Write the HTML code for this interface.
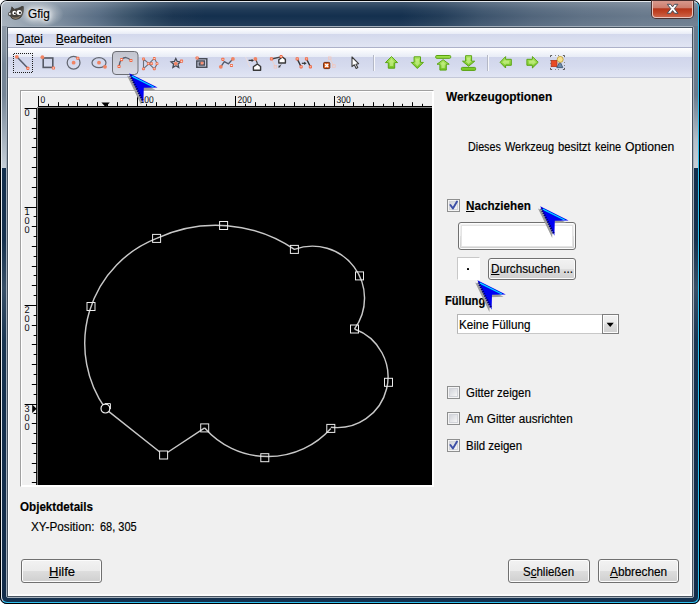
<!DOCTYPE html><html><head><meta charset="utf-8"><title>Gfig</title><style>
html,body{margin:0;padding:0;background:#fff;}
body{width:700px;height:604px;overflow:hidden;position:relative;font-family:"Liberation Sans",sans-serif;font-size:12px;}
.a{position:absolute;}
.t{position:absolute;white-space:pre;line-height:14px;height:14px;transform-origin:0 0;-webkit-text-stroke:0.16px #000;}
.t u{text-decoration:underline;text-underline-offset:0.5px;}
#win{position:absolute;left:0;top:0;width:700px;height:604px;border-radius:7px 7px 7px 7px;overflow:hidden;background:#6b7b8d;}
#client{position:absolute;left:8px;top:28px;width:684px;height:568px;background:#f0f0f0;}
.btn{position:absolute;box-sizing:border-box;border:1px solid #707070;border-radius:3px;background:linear-gradient(#f2f2f2 0%,#ebebeb 48%,#dddddd 52%,#cfcfcf 100%);box-shadow:inset 0 0 0 1px #fcfcfc;}
.cb{position:absolute;box-sizing:border-box;width:13px;height:13px;border:1px solid #8e8f8f;background:#f4f4f4;box-shadow:inset 0 0 0 1px #f4f4f4, inset 0 0 0 2px #d2d4da;}
.cb i{position:absolute;left:2px;top:2px;width:7px;height:7px;background:linear-gradient(135deg,#d2d4da,#f6f6f6);}
</style></head><body>
<div id="win">
<div class="a" style="left:0;top:0;width:700px;height:28px;background:linear-gradient(97deg,#a6b1bd 0px,#98a5b2 22px,#8292a2 48px,#6d7f93 74px,#586d84 100px,#40586f 124px,#2a445e 148px,#1b3551 174px,#14304e 205px,#14304e 400px,#233d59 440px,#3c536c 480px,#51657b 530px,#5f7185 580px,#68798c 640px,#6b7b8d 700px);"></div>
<div class="a" style="left:0;top:0;width:700px;height:28px;background:linear-gradient(rgba(255,255,255,.22) 0px,rgba(255,255,255,.06) 9px,rgba(255,255,255,0) 16px,rgba(255,255,255,.07) 28px);"></div>
<div class="a" style="left:0;top:26px;width:8px;height:578px;background:linear-gradient(180deg,#9aa6b3 0px,#8c98a6 30px,#8391a0 50px,#758596 64px,#758596 95px,#a8b4c0 140px,#c6cfd8 168px,#14304e 168px,#16314e 240px,#385068 288px,#1a3652 340px,#14304e 400px,#132c49 604px);background-position:0 -26px;background-size:8px 604px;"></div>
<div class="a" style="left:692px;top:26px;width:8px;height:578px;background:linear-gradient(180deg,#6b7b8d 0px,#6b7b8d 95px,#b4bec8 140px,#c8d0d8 168px,#14304e 168px,#16314e 240px,#385068 288px,#1a3652 340px,#14304e 400px,#132c49 604px);background-position:0 -26px;background-size:8px 604px;"></div>
<div class="a" style="left:0;top:596px;width:700px;height:8px;background:#14304e;"></div>
<div class="a" style="left:0;top:0;width:700px;height:604px;border-radius:7px;box-sizing:border-box;border:1px solid #000;"></div>
<div class="a" style="left:1px;top:1px;width:698px;height:602px;border-radius:6px;box-sizing:border-box;border:1px solid #e4e9ee;border-right-color:#30c0f0;border-bottom-color:#30c0f0;"></div>
<div class="a" style="left:6px;top:26px;width:688px;height:572px;box-sizing:border-box;border:1px solid #a4afbb;border-radius:2px;"></div>
<div class="a" style="left:7px;top:27px;width:686px;height:570px;box-sizing:border-box;border:1px solid #46525f;"></div>
<svg class="a" style="left:8px;top:6px" width="16" height="14" viewBox="0 0 16 14">
<path d="M3.2 3.6 L3.8 0.8 L6.2 3.2 Q9.5 2.6 12 1.4 Q14.6 -0.4 15.4 0.6 Q16 5 14.6 8.6 Q12.6 13.2 7.6 13.4 Q3.6 13.4 2.4 10.2 Q0.2 9.6 0.3 7.8 Q0.6 6 2.4 6.2 Q2.4 4.6 3.2 3.6Z" fill="#46423c" stroke="#2a2824" stroke-width=".5"/>
<path d="M3.2 10.2 Q7 13.4 12.6 9.4 Q11 12.8 7.4 12.9 Q4.4 12.8 3.2 10.2Z" fill="#8a7c68"/>
<ellipse cx="6.3" cy="6.9" rx="2" ry="2.1" fill="#fff"/><ellipse cx="11.2" cy="6.5" rx="2.6" ry="2.5" fill="#fff"/>
<circle cx="6.9" cy="7.2" r=".9" fill="#111"/><circle cx="12" cy="6.8" r="1.1" fill="#111"/>
<ellipse cx="1.8" cy="7.9" rx="1.5" ry="1.3" fill="#f4f4f4" stroke="#1c1c1c" stroke-width=".5"/>
</svg>
<div class="a" style="left:18px;top:1px;width:46px;height:26px;background:radial-gradient(ellipse at center,rgba(255,255,255,.55) 0%,rgba(255,255,255,.35) 35%,rgba(255,255,255,0) 70%);"></div>
<span class="t" style="left:28.34px;top:7px;font-size:12px;color:#000;transform:scaleX(0.9877);text-shadow:0 0 4px #fff,0 0 6px #fff,0 0 8px rgba(255,255,255,.8);">Gfig</span>
<div class="a" style="left:652px;top:1px;width:41px;height:17px;box-sizing:border-box;border:1px solid #e9c4bc;border-top:none;border-radius:0 0 4px 4px;background:linear-gradient(#d8988c 0%,#cc7c6c 44%,#b4341a 48%,#c04425 70%,#cc6248 100%);box-shadow:0 0 0 1px #4a3030;"></div>
<svg class="a" style="left:666px;top:3px" width="14" height="12" viewBox="0 0 14 12"><path d="M1.3 1.3 L4.7 1.3 L6.6 3.9 L8.5 1.3 L11.9 1.3 L8.4 5.7 L12 10.3 L8.6 10.3 L6.6 7.6 L4.6 10.3 L1.2 10.3 L4.8 5.7 Z" fill="#fff" stroke="#464e5a" stroke-width="1" stroke-linejoin="round"/></svg>
<div id="client">
<div class="a" style="left:0px;top:0px;width:684px;height:19px;background:linear-gradient(#ffffff 0%,#f4f6fb 15%,#e8ecf6 31%,#d3d8ec 32%,#d9deef 60%,#e1e5f3 100%);"></div>
<div class="a" style="left:0px;top:19px;width:684px;height:1px;background:#adb2ca;"></div>
<div class="a" style="left:0px;top:20px;width:684px;height:29px;background:linear-gradient(#ffffff 0%,#f4f6fb 14%,#e8ecf6 30%,#d0d5eb 31%,#d6dbee 65%,#e1e5f4 100%);"></div>
<div class="a" style="left:0px;top:49px;width:684px;height:1px;background:#c4c8d8;"></div>
<div class="a" style="left:0px;top:50px;width:1px;height:518px;background:#fff;"></div>
<div class="a" style="left:682px;top:50px;width:2px;height:518px;background:linear-gradient(90deg,#f8f8f8,#fff);"></div>
<div class="a" style="left:0px;top:566px;width:684px;height:2px;background:linear-gradient(#f8f8f8,#fff);"></div>
</div>
<span class="t" style="left:15.85px;top:31.6px;font-size:12px;color:#000;transform:scaleX(0.9538);"><u>D</u>atei</span>
<span class="t" style="left:55.74px;top:31.6px;font-size:12px;color:#000;transform:scaleX(0.9601);"><u>B</u>earbeiten</span>
<svg class="a" style="left:0;top:48px" width="700" height="30" viewBox="0 48 700 30"><path d="M13.5 53.5 H32 L32.5 54 V72.5 H14 L13.5 72 Z" fill="none" stroke="#1c1c1c" stroke-width="1" stroke-dasharray="1 1" shape-rendering="crispEdges"/><line x1="16.8" y1="56.8" x2="27.9" y2="68.2" stroke="#565c6c" stroke-width="1.5"/><circle cx="16.8" cy="56.8" r="1.9" fill="#f08464"/><rect x="26.3" y="66.8" width="3.1" height="3.1" fill="#f06a48" rx=".8"/><rect x="27.1" y="67.8" width="1.6" height="1" fill="#ffd0bc"/><rect x="43.2" y="58" width="9.6" height="9.4" fill="none" stroke="#565a66" stroke-width="1.6"/><circle cx="42.4" cy="57.2" r="1.9" fill="#f08464"/><rect x="51.9" y="66.5" width="3.1" height="3.1" fill="#f06a48" rx=".8"/><rect x="52.6" y="67.5" width="1.6" height="1" fill="#fff"/><circle cx="73.6" cy="62.7" r="6.4" fill="none" stroke="#646872" stroke-width="1.25"/><circle cx="73.6" cy="62.7" r="1.9" fill="#f08464"/><rect x="76.2" y="56.7" width="3.1" height="3.1" fill="#f06a48" rx=".8"/><rect x="76.9" y="57.7" width="1.6" height="1" fill="#ffd0bc"/><ellipse cx="99" cy="62.7" rx="7" ry="5" fill="none" stroke="#646872" stroke-width="1.25"/><circle cx="99.0" cy="62.7" r="1.9" fill="#f08464"/><circle cx="105.0" cy="66.8" r="1.9" fill="#f08464"/><defs><linearGradient id="pg" x1="0" y1="0" x2="0" y2="1"><stop offset="0" stop-color="#c2c4ce"/><stop offset="1" stop-color="#d9dbe6"/></linearGradient></defs><rect x="112.5" y="51.5" width="25.5" height="23" rx="3.5" fill="url(#pg)" stroke="#6c6e74" stroke-width="1"/><path d="M119 66.5 Q119.5 61.5 121.5 59.6 Q125.8 55 131 60.5" fill="none" stroke="#5a6070" stroke-width="1.3"/><rect x="117.5" y="65.0" width="3.1" height="3.1" fill="#f06a48" rx=".8"/><rect x="118.2" y="66.0" width="1.6" height="1" fill="#ffd0bc"/><rect x="120.0" y="58.1" width="3.1" height="3.1" fill="#f06a48" rx=".8"/><rect x="120.7" y="59.1" width="1.6" height="1" fill="#fff"/><rect x="129.4" y="59.0" width="3.1" height="3.1" fill="#f06a48" rx=".8"/><rect x="130.2" y="60.0" width="1.6" height="1" fill="#ffd0bc"/><path d="M143.5 59 L143.5 68.6 L149 63.7 Z M149 63.7 L154.3 58.3 L157.3 63.7 L154.3 68.8 Z" fill="none" stroke="#6c707a" stroke-width="1.1"/><rect x="142.1" y="57.6" width="2.8" height="2.8" fill="#f06a48" rx=".8"/><rect x="142.7" y="58.5" width="1.6" height="1" fill="#ffd0bc"/><rect x="142.1" y="67.4" width="2.8" height="2.8" fill="#f06a48" rx=".8"/><rect x="142.7" y="68.3" width="1.6" height="1" fill="#ffd0bc"/><rect x="146.9" y="62.3" width="2.8" height="2.8" fill="#f06a48" rx=".8"/><rect x="147.5" y="63.2" width="1.6" height="1" fill="#ffd0bc"/><rect x="150.2" y="62.3" width="2.8" height="2.8" fill="#f06a48" rx=".8"/><rect x="150.8" y="63.2" width="1.6" height="1" fill="#ffd0bc"/><rect x="152.9" y="57.1" width="2.8" height="2.8" fill="#f06a48" rx=".8"/><rect x="153.5" y="58.0" width="1.6" height="1" fill="#ffd0bc"/><rect x="155.6" y="62.3" width="2.8" height="2.8" fill="#f06a48" rx=".8"/><rect x="156.2" y="63.2" width="1.6" height="1" fill="#ffd0bc"/><rect x="152.9" y="67.4" width="2.8" height="2.8" fill="#f06a48" rx=".8"/><rect x="153.5" y="68.3" width="1.6" height="1" fill="#ffd0bc"/><polygon points="175.8,58.5 177.2,61.5 180.5,61.9 178.0,64.1 178.7,67.4 175.8,65.7 172.9,67.4 173.6,64.1 171.1,61.9 174.4,61.5" fill="none" stroke="#484c56" stroke-width="1.3"/><circle cx="175.8" cy="63.6" r="1.9" fill="#f08464"/><rect x="179.9" y="59.6" width="3.2" height="3.2" fill="#f06a48" rx=".8"/><rect x="180.7" y="60.7" width="1.6" height="1" fill="#fff"/><path d="M197 58.7 L206.8 58.7 L206.8 67.2 L196.8 67.2 L196.8 61.1 L204.4 61.1 L204.4 65 L199.3 65 L199.3 63.1 L202 63.1" fill="none" stroke="#4a4e58" stroke-width="1.5"/><rect x="195.6" y="56.5" width="3.1" height="3.1" fill="#f06a48" rx=".8"/><rect x="196.4" y="57.5" width="1.6" height="1" fill="#ffd0bc"/><rect x="200.6" y="61.7" width="2.8" height="2.8" fill="#f06a48" rx=".8"/><rect x="201.2" y="62.6" width="1.6" height="1" fill="#ffd0bc"/><path d="M220.8 66.8 L224.3 61.6 L228.5 63.8 L232.9 58.9" fill="none" stroke="#565c6c" stroke-width="1.4" stroke-linejoin="round"/><circle cx="220.8" cy="66.8" r="1.9" fill="#f08464"/><rect x="221.3" y="57.8" width="3.1" height="3.1" fill="#f06a48" rx=".8"/><rect x="222.1" y="58.8" width="1.6" height="1" fill="#ffd0bc"/><rect x="229.9" y="63.9" width="3.1" height="3.1" fill="#f06a48" rx=".8"/><rect x="230.7" y="64.9" width="1.6" height="1" fill="#fff"/><circle cx="232.9" cy="58.9" r="1.9" fill="#f08464"/><path d="M245.6 57 L249.7 67" stroke="#ecdcdc" stroke-width="1" fill="none"/><path d="M248.6 60.4 L252.5 60.4" stroke="#333" stroke-width="1.2"/><path d="M251.6 58.9 L254 60.4 L251.6 61.9 Z" fill="#333"/><path d="M255.6 59 L257.4 63.4" stroke="#444" stroke-width="1.2"/><circle cx="255.4" cy="58.9" r="1.9" fill="#f08464"/><path d="M253.4 70.2 V66.79 L257.36 64 L260.6 66.48 V70.2 Z" fill="#fff" stroke="#383838" stroke-width="1.4" stroke-linejoin="round"/><path d="M271.5 59 L275.4 66.8" stroke="#ecd0c8" stroke-width="1" fill="none"/><path d="M271.5 59 L281 56.8" stroke="#444" stroke-width="1.3"/><rect x="274.1" y="65.5" width="2.6" height="2.6" fill="none" stroke="#f4c4b8" stroke-width=".7"/><path d="M278.8 63 V59.7 L282.43 57 L285.40000000000003 59.4 V63 Z" fill="#fff" stroke="#383838" stroke-width="1.4" stroke-linejoin="round"/><rect x="269.9" y="57.3" width="3.2" height="3.2" fill="#f06a48" rx=".8"/><rect x="270.7" y="58.4" width="1.6" height="1" fill="#ffd0bc"/><rect x="279.6" y="55.1" width="3" height="3" fill="#f06a48" rx=".8"/><rect x="280.3" y="56.1" width="1.6" height="1" fill="#ffd0bc"/><path d="M281 64.6 L279.6 66.2" stroke="#333" stroke-width="1"/><path d="M278.3 67.8 L278.9 65.2 L280.8 66.9 Z" fill="#333"/><path d="M297.2 58.9 L301.1 66.8 M306.5 58.9 L310.4 66.8" stroke="#333" stroke-width="1.4" fill="none"/><path d="M301.8 63.3 L305 63.3" stroke="#333" stroke-width="1.2"/><path d="M304.2 61.7 L306.6 63.3 L304.2 64.9 Z" fill="#333"/><rect x="295.6" y="57.3" width="3.2" height="3.2" fill="#f06a48" rx=".8"/><rect x="296.4" y="58.4" width="1.6" height="1" fill="#ffd0bc"/><rect x="299.5" y="65.2" width="3.2" height="3.2" fill="#f06a48" rx=".8"/><rect x="300.3" y="66.3" width="1.6" height="1" fill="#ffd0bc"/><rect x="304.9" y="57.3" width="3.2" height="3.2" fill="#f06a48" rx=".8"/><rect x="305.7" y="58.4" width="1.6" height="1" fill="#ffd0bc"/><rect x="308.8" y="65.2" width="3.2" height="3.2" fill="#f06a48" rx=".8"/><rect x="309.6" y="66.3" width="1.6" height="1" fill="#ffd0bc"/><path d="M329.7 58.2 L333.9 66" stroke="#ecd0c8" stroke-width="1" fill="none"/><rect x="328.4" y="56.9" width="2.6" height="2.6" fill="none" stroke="#f4c4b8" stroke-width=".7"/><rect x="332.6" y="64.7" width="2.6" height="2.6" fill="none" stroke="#f4c4b8" stroke-width=".7"/><rect x="323.6" y="62.4" width="6.2" height="6.2" rx="1" fill="#e0601c" stroke="#6a2a10" stroke-width="1"/><path d="M325.2 64 L328.2 67 M328.2 64 L325.2 67" stroke="#fff" stroke-width="1.5"/><path d="M352 57 L352 66.6 L354.3 64.8 L356.2 68.4 L357.8 67.6 L356 64.2 L358.6 63.7 Z" fill="#fff" stroke="#3c3c3c" stroke-width="1.1" stroke-linejoin="round"/><rect x="373" y="55" width="1" height="16" fill="#b4b8c6"/><rect x="374" y="55" width="1" height="16" fill="#f6f7fb"/><rect x="487" y="55" width="1" height="16" fill="#b4b8c6"/><rect x="488" y="55" width="1" height="16" fill="#f6f7fb"/><defs><linearGradient id="gg" x1="0" y1="0" x2="0" y2="1"><stop offset="0" stop-color="#b4ea68"/><stop offset="1" stop-color="#74c422"/></linearGradient><linearGradient id="gh" x1="0" y1="0" x2="1" y2="0"><stop offset="0" stop-color="#a8e458"/><stop offset="1" stop-color="#68bc14"/></linearGradient></defs><path d="M391.5 56.6 L397.6 62.6 L394.7 62.6 L394.7 68.2 L388.3 68.2 L388.3 62.6 L385.4 62.6 Z" fill="url(#gg)" stroke="#5ca616" stroke-width="1" stroke-linejoin="round"/><path d="M391.5 56.6 L397.6 62.6 L394.7 62.6 L394.7 68.2 L388.3 68.2 L388.3 62.6 L385.4 62.6 Z" fill="#d8f8a0" opacity=".55" transform="translate(391.5 62.400000000000006) scale(.5 .62) translate(-391.5 -62.400000000000006)"/><path d="M417.3 68.5 L423.40000000000003 62.4 L420.5 62.4 L420.5 56.8 L414.1 56.8 L414.1 62.4 L411.2 62.4 Z" fill="url(#gg)" stroke="#5ca616" stroke-width="1" stroke-linejoin="round"/><path d="M417.3 68.5 L423.40000000000003 62.4 L420.5 62.4 L420.5 56.8 L414.1 56.8 L414.1 62.4 L411.2 62.4 Z" fill="#d8f8a0" opacity=".55" transform="translate(417.3 62.65) scale(.5 .62) translate(-417.3 -62.65)"/><rect x="435.7" y="55.5" width="15" height="2.8" rx="1" fill="#9ce048" stroke="#58a010" stroke-width="1"/><path d="M443.1 59.7 L449.20000000000005 64.2 L446.3 64.2 L446.3 70.1 L439.90000000000003 70.1 L439.90000000000003 64.2 L437.0 64.2 Z" fill="url(#gg)" stroke="#5ca616" stroke-width="1" stroke-linejoin="round"/><path d="M443.1 59.7 L449.20000000000005 64.2 L446.3 64.2 L446.3 70.1 L439.90000000000003 70.1 L439.90000000000003 64.2 L437.0 64.2 Z" fill="#d8f8a0" opacity=".55" transform="translate(443.1 64.9) scale(.5 .62) translate(-443.1 -64.9)"/><path d="M468.6 66.3 L474.70000000000005 61.2 L471.6 61.2 L471.6 55.7 L465.6 55.7 L465.6 61.2 L462.5 61.2 Z" fill="url(#gg)" stroke="#5ca616" stroke-width="1" stroke-linejoin="round"/><path d="M468.6 66.3 L474.70000000000005 61.2 L471.6 61.2 L471.6 55.7 L465.6 55.7 L465.6 61.2 L462.5 61.2 Z" fill="#d8f8a0" opacity=".55" transform="translate(468.6 61.0) scale(.5 .62) translate(-468.6 -61.0)"/><rect x="461.4" y="67.4" width="14.2" height="3" rx="1" fill="#7ccc28" stroke="#58a010" stroke-width="1"/><path d="M500.1 62.3 L505.6 56.599999999999994 L505.6 59.3 L511.3 59.3 L511.3 65.3 L505.6 65.3 L505.6 68.0 Z" fill="url(#gg)" stroke="#5ca616" stroke-width="1" stroke-linejoin="round"/><path d="M500.1 62.3 L505.6 56.599999999999994 L505.6 59.3 L511.3 59.3 L511.3 65.3 L505.6 65.3 L505.6 68.0 Z" fill="#d8f8a0" opacity=".55" transform="translate(505.70000000000005 62.3) scale(.62 .5) translate(-505.70000000000005 -62.3)"/><path d="M538.2 62.3 L532.4 56.599999999999994 L532.4 59.3 L526.9 59.3 L526.9 65.3 L532.4 65.3 L532.4 68.0 Z" fill="url(#gg)" stroke="#5ca616" stroke-width="1" stroke-linejoin="round"/><path d="M538.2 62.3 L532.4 56.599999999999994 L532.4 59.3 L526.9 59.3 L526.9 65.3 L532.4 65.3 L532.4 68.0 Z" fill="#d8f8a0" opacity=".55" transform="translate(532.55 62.3) scale(.62 .5) translate(-532.55 -62.3)"/><rect x="551.2" y="60.4" width="5.8" height="6.2" fill="#e84a24" stroke="#b03820" stroke-width=".8"/><path d="M556.8 67.6 L560 61.6 L562.8 67.6 Z" fill="#6c8cac" stroke="#48607c" stroke-width="1" stroke-linejoin="round"/><circle cx="560.2" cy="59.4" r="3" fill="#f6e08c" stroke="#c0a040" stroke-width=".9"/><path d="M552.1 55.5 L550.5 55.5 L550.5 57.1" fill="none" stroke="#444" stroke-width="1" opacity=".85"/><path d="M562.9 55.5 L564.5 55.5 L564.5 57.1" fill="none" stroke="#444" stroke-width="1" opacity=".85"/><path d="M552.1 69.5 L550.5 69.5 L550.5 67.9" fill="none" stroke="#444" stroke-width="1" opacity=".85"/><path d="M562.9 69.5 L564.5 69.5 L564.5 67.9" fill="none" stroke="#444" stroke-width="1" opacity=".85"/><path d="M555 55.5 h1 M558 55.5 h1 M555 69.5 h1 M558 69.5 h1 M550.5 60 v1 M550.5 63 v1 M564.5 62 v1 M564.5 65 v1" stroke="#888" stroke-width="1"/></svg>
<div class="a" style="left:20px;top:90px;width:414px;height:397px;box-sizing:border-box;border:1px solid #a0a0a0;border-right-color:#fff;border-bottom-color:#fff;"></div>
<div class="a" style="left:21px;top:91px;width:412px;height:395px;box-sizing:border-box;border:1px solid #fff;"></div>
<div class="a" style="left:37px;top:107px;width:395px;height:378px;background:#808080;"></div>
<div class="a" style="left:38px;top:108px;width:394px;height:377px;background:#000;"></div>
<svg class="a" style="left:20px;top:90px" width="413" height="397" viewBox="20 90 413 397"><path d="M39 106.5 H432" stroke="#000" stroke-width="1"/><path d="M36.5 108 V485" stroke="#1a1a1a" stroke-width="1"/><path d="M38.5 96 V107 M48.5 103.8 V107 M58.5 102.2 V107 M68.5 103.8 V107 M77.5 102.2 V107 M87.5 103.8 V107 M97.5 102.2 V107 M107.5 103.8 V107 M117.5 102.2 V107 M127.5 103.8 V107 M137.5 96 V107 M146.5 103.8 V107 M156.5 102.2 V107 M166.5 103.8 V107 M176.5 102.2 V107 M186.5 103.8 V107 M196.5 102.2 V107 M205.5 103.8 V107 M215.5 102.2 V107 M225.5 103.8 V107 M235.5 96 V107 M245.5 103.8 V107 M255.5 102.2 V107 M265.5 103.8 V107 M274.5 102.2 V107 M284.5 103.8 V107 M294.5 102.2 V107 M304.5 103.8 V107 M314.5 102.2 V107 M324.5 103.8 V107 M334.5 96 V107 M343.5 103.8 V107 M353.5 102.2 V107 M363.5 103.8 V107 M373.5 102.2 V107 M383.5 103.8 V107 M393.5 102.2 V107 M402.5 103.8 V107 M412.5 102.2 V107 M422.5 103.8 V107" stroke="#000" stroke-width="1"/><path d="M24.6 108.5 H37 M33.6 118.5 H37 M31.8 128.5 H37 M33.6 138.5 H37 M31.8 147.5 H37 M33.6 157.5 H37 M31.8 167.5 H37 M33.6 177.5 H37 M31.8 187.5 H37 M33.6 197.5 H37 M24.6 207.5 H37 M33.6 216.5 H37 M31.8 226.5 H37 M33.6 236.5 H37 M31.8 246.5 H37 M33.6 256.5 H37 M31.8 266.5 H37 M33.6 275.5 H37 M31.8 285.5 H37 M33.6 295.5 H37 M24.6 305.5 H37 M33.6 315.5 H37 M31.8 325.5 H37 M33.6 335.5 H37 M31.8 344.5 H37 M33.6 354.5 H37 M31.8 364.5 H37 M33.6 374.5 H37 M31.8 384.5 H37 M33.6 394.5 H37 M24.6 404.5 H37 M33.6 413.5 H37 M31.8 423.5 H37 M33.6 433.5 H37 M31.8 443.5 H37 M33.6 453.5 H37 M31.8 463.5 H37 M33.6 472.5 H37 M31.8 482.5 H37" stroke="#000" stroke-width="1"/><path d="M101.4 102.4 L109.8 102.4 L105.6 107 Z" fill="#000"/><path d="M32.2 404.4 L32.2 413 L36.6 408.7 Z" fill="#000"/><text transform="translate(40.6,102.8) scale(1,1)" text-rendering="geometricPrecision" font-family="Liberation Sans, sans-serif" font-size="9.8" fill="#05060c" textLength="4.7" lengthAdjust="spacingAndGlyphs">0</text><text transform="translate(139.6,102.8) scale(1,1)" text-rendering="geometricPrecision" font-family="Liberation Sans, sans-serif" font-size="9.8" fill="#05060c" textLength="14.1" lengthAdjust="spacingAndGlyphs">100</text><text transform="translate(237.6,102.8) scale(1,1)" text-rendering="geometricPrecision" font-family="Liberation Sans, sans-serif" font-size="9.8" fill="#05060c" textLength="14.1" lengthAdjust="spacingAndGlyphs">200</text><text transform="translate(336.6,102.8) scale(1,1)" text-rendering="geometricPrecision" font-family="Liberation Sans, sans-serif" font-size="9.8" fill="#05060c" textLength="14.1" lengthAdjust="spacingAndGlyphs">300</text><text text-rendering="geometricPrecision" font-family="Liberation Sans, sans-serif" font-size="9.8" fill="#05060c"><tspan x="24.5" y="116.1" textLength="5.1" lengthAdjust="spacingAndGlyphs">0</tspan></text><text text-rendering="geometricPrecision" font-family="Liberation Sans, sans-serif" font-size="9.8" fill="#05060c"><tspan x="24.5" y="215.1" textLength="5.1" lengthAdjust="spacingAndGlyphs">1</tspan><tspan x="24.5" y="224.2" textLength="5.1" lengthAdjust="spacingAndGlyphs">0</tspan><tspan x="24.5" y="233.3" textLength="5.1" lengthAdjust="spacingAndGlyphs">0</tspan></text><text text-rendering="geometricPrecision" font-family="Liberation Sans, sans-serif" font-size="9.8" fill="#05060c"><tspan x="24.5" y="313.1" textLength="5.1" lengthAdjust="spacingAndGlyphs">2</tspan><tspan x="24.5" y="322.2" textLength="5.1" lengthAdjust="spacingAndGlyphs">0</tspan><tspan x="24.5" y="331.3" textLength="5.1" lengthAdjust="spacingAndGlyphs">0</tspan></text><text text-rendering="geometricPrecision" font-family="Liberation Sans, sans-serif" font-size="9.8" fill="#05060c"><tspan x="24.5" y="412.1" textLength="5.1" lengthAdjust="spacingAndGlyphs">3</tspan><tspan x="24.5" y="421.2" textLength="5.1" lengthAdjust="spacingAndGlyphs">0</tspan><tspan x="24.5" y="430.3" textLength="5.1" lengthAdjust="spacingAndGlyphs">0</tspan></text></svg>
<svg class="a" style="left:38px;top:108px" width="394" height="378" viewBox="38 108 394 378"><path d="M105.4 408.6 A112.84 112.84 0 0 1 156.6 238.4 M156.6 238.4 A140.14 140.14 0 0 1 294.4 249.4 M294.4 249.4 A52.09 52.09 0 0 1 354.5 329 M354.5 329 A50.82 50.82 0 0 1 330.8 427.2 M330.8 428.4 A84.17 84.17 0 0 1 204.7 427.9 M204.7 427.9 L163.6 455 L106.4 409.6" fill="none" stroke="#c8c8c8" stroke-width="1.45" stroke-linejoin="round"/><rect x="87.0" y="302.5" width="8" height="8" fill="none" stroke="#ececec" stroke-width="1"/><rect x="152.6" y="234.4" width="8" height="8" fill="none" stroke="#ececec" stroke-width="1"/><rect x="219.6" y="221.5" width="8" height="8" fill="none" stroke="#ececec" stroke-width="1"/><rect x="290.4" y="245.4" width="8" height="8" fill="none" stroke="#ececec" stroke-width="1"/><rect x="355.5" y="271.9" width="8" height="8" fill="none" stroke="#ececec" stroke-width="1"/><rect x="350.5" y="325.0" width="8" height="8" fill="none" stroke="#ececec" stroke-width="1"/><rect x="384.5" y="378.3" width="8" height="8" fill="none" stroke="#ececec" stroke-width="1"/><rect x="326.8" y="424.4" width="8" height="8" fill="none" stroke="#ececec" stroke-width="1"/><rect x="260.8" y="453.7" width="8" height="8" fill="none" stroke="#ececec" stroke-width="1"/><rect x="200.7" y="423.9" width="8" height="8" fill="none" stroke="#ececec" stroke-width="1"/><rect x="159.6" y="451.0" width="8" height="8" fill="#000" stroke="#ececec" stroke-width="1"/><circle cx="105.4" cy="408.6" r="4.4" fill="#000" stroke="#f0f0f0" stroke-width="1.2"/><path d="M104.9 403.6 H110.4 V409.1" fill="none" stroke="#ececec" stroke-width="1"/></svg>
<span class="t" style="left:446.00px;top:90.3px;font-size:12px;font-weight:bold;color:#000;transform:scaleX(0.9910);">Werkzeugoptionen</span>
<div class="a" style="left:0;top:0;width:0;height:0"><span class="t" style="left:468.01px;top:140px;font-size:12px;color:#000;transform:scaleX(0.8942);">Dieses</span> <span class="t" style="left:504.92px;top:140px;font-size:12px;color:#000;transform:scaleX(0.9110);">Werkzeug</span> <span class="t" style="left:558.06px;top:140px;font-size:12px;color:#000;transform:scaleX(0.9403);">besitzt</span> <span class="t" style="left:594.79px;top:140px;font-size:12px;color:#000;transform:scaleX(0.9116);">keine</span> <span class="t" style="left:624.69px;top:140px;font-size:12px;color:#000;transform:scaleX(1.0132);">Optionen</span></div>
<div class="cb" style="left:447px;top:199px"><i></i><svg class="a" style="left:0;top:0" width="11" height="11" viewBox="0 0 11 11"><path d="M2.4 5 L4.9 8.4 L9 1.6" fill="none" stroke="#3c4fa6" stroke-width="1.9" stroke-linejoin="round" stroke-linecap="round"/></svg></div>
<span class="t" style="left:465.63px;top:199px;font-size:12px;font-weight:bold;color:#000;transform:scaleX(0.9708);"><u>N</u>achziehen</span>
<div class="btn" style="left:458px;top:222px;width:118px;height:28px;"></div>
<div class="a" style="left:462px;top:226px;width:110px;height:20px;background:#fff;box-shadow:0 0 0 1px #e4e4e4;"></div>
<div class="a" style="left:457px;top:257px;width:23px;height:23px;box-sizing:border-box;background:#fff;border:1px solid #c8c8c8;border-right-color:#fff;border-bottom-color:#fff;"></div>
<div class="a" style="left:467.3px;top:268.1px;width:2px;height:2px;background:#000;border-radius:.6px;"></div>
<div class="btn" style="left:488px;top:258px;width:88px;height:22px;"></div>
<span class="t" style="left:490.72px;top:262px;font-size:12px;color:#000;transform:scaleX(0.9756);"><u>D</u>urchsuchen ...</span>
<span class="t" style="left:444.67px;top:293.6px;font-size:12px;font-weight:bold;color:#000;transform:scaleX(0.9288);">Füllung</span>
<div class="a" style="left:457px;top:314px;width:162px;height:20px;box-sizing:border-box;background:#fff;border:1px solid #b4b4b4;border-bottom-color:#c8c8c8;"></div>
<span class="t" style="left:459.43px;top:317.6px;font-size:12px;color:#000;transform:scaleX(0.9729);">Keine Füllung</span>
<div class="btn" style="left:602px;top:314px;width:17px;height:20px;border-radius:0;border-color:#7e7e7e;"></div>
<svg class="a" style="left:606px;top:322px" width="9" height="6" viewBox="0 0 9 6"><path d="M0.6 0.7 L7.8 0.7 L4.2 5 Z" fill="#000"/></svg>
<div class="cb" style="left:447px;top:386px"><i></i></div>
<span class="t" style="left:466.16px;top:385.5px;font-size:12px;color:#000;transform:scaleX(0.9524);">Gitter zeigen</span>
<div class="cb" style="left:447px;top:412px"><i></i></div>
<span class="t" style="left:466.47px;top:412.4px;font-size:12px;color:#000;transform:scaleX(0.9750);">Am Gitter ausrichten</span>
<div class="cb" style="left:447px;top:439px"><i></i><svg class="a" style="left:0;top:0" width="11" height="11" viewBox="0 0 11 11"><path d="M2.4 5 L4.9 8.4 L9 1.6" fill="none" stroke="#3c4fa6" stroke-width="1.9" stroke-linejoin="round" stroke-linecap="round"/></svg></div>
<span class="t" style="left:465.65px;top:438.6px;font-size:12px;color:#000;transform:scaleX(0.9548);">Bild zeigen</span>
<span class="t" style="left:19.60px;top:499.5px;font-size:12px;font-weight:bold;color:#000;transform:scaleX(0.9693);">Objektdetails</span>
<span class="t" style="left:31.19px;top:520px;font-size:12px;color:#000;transform:scaleX(0.9777);">XY-Position:</span>
<span class="t" style="left:100.38px;top:520px;font-size:12px;color:#000;transform:scaleX(0.9155);">68, 305</span>
<div class="btn" style="left:21px;top:559px;width:81px;height:24px;"></div>
<span class="t" style="left:48.71px;top:564.5px;font-size:12px;color:#000;transform:scaleX(1.0858);"><u>H</u>ilfe</span>
<div class="btn" style="left:508px;top:559px;width:82px;height:24px;"></div>
<span class="t" style="left:523.04px;top:564.5px;font-size:12px;color:#000;transform:scaleX(0.9584);">S<u>c</u>hließen</span>
<div class="btn" style="left:598px;top:559px;width:81px;height:24px;"></div>
<span class="t" style="left:610.17px;top:564.5px;font-size:12px;color:#000;transform:scaleX(0.9840);"><u>A</u>bbrechen</span>
<svg class="a" style="left:0;top:0" width="700" height="604" viewBox="0 0 700 604"><polygon points="127.0,75.6 155.4,89.8 141.6,90.2 141.2,105.1" fill="#9c9c9c"/><polygon points="129.2,73.2 157.6,87.4 143.8,87.8 143.4,102.7" fill="#0000f4"/><path d="M131.79999999999998 76.10000000000001 L153.6 87.0" stroke="#00d8ff" stroke-width="1.2"/><path d="M130.2 75.4 L142.79999999999998 100.7" stroke="#00006c" stroke-width="2.2" stroke-dasharray="1.3 1.1"/><polygon points="538.0,208.6 566.4,222.8 552.6,223.2 552.2,238.1" fill="#9c9c9c"/><polygon points="540.2,206.2 568.6,220.4 554.8,220.8 554.4,235.7" fill="#0000f4"/><path d="M542.8000000000001 209.1 L564.6 220.0" stroke="#00d8ff" stroke-width="1.2"/><path d="M541.2 208.39999999999998 L553.8000000000001 233.7" stroke="#00006c" stroke-width="2.2" stroke-dasharray="1.3 1.1"/><polygon points="475.2,282.6 503.6,296.8 489.8,297.2 489.4,312.1" fill="#9c9c9c"/><polygon points="477.4,280.2 505.8,294.4 492.0,294.8 491.6,309.7" fill="#0000f4"/><path d="M480.0 283.09999999999997 L501.79999999999995 294.0" stroke="#00d8ff" stroke-width="1.2"/><path d="M478.4 282.4 L491.0 307.7" stroke="#00006c" stroke-width="2.2" stroke-dasharray="1.3 1.1"/></svg>
</div></body></html>
